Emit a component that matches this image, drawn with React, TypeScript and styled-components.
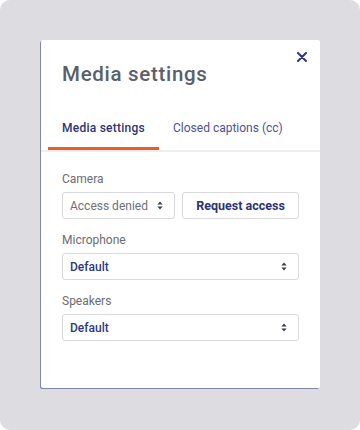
import React from 'react';
import styled, { createGlobalStyle } from 'styled-components';

const GlobalStyle = createGlobalStyle`
  body {
    margin: 0;
    background: #ffffff;
    font-family: Roboto, 'Liberation Sans', sans-serif;
  }
`;

const ArrowsIcon = () => (
  <svg width="6" height="9" viewBox="0 0 6 9">
    <path d="M3 0.5 L5.6 3.6 H0.4 Z" fill="#3a3d4a" />
    <path d="M3 8.5 L5.6 5.4 H0.4 Z" fill="#3a3d4a" />
  </svg>
);

const CloseIcon = () => (
  <svg width="10" height="10" viewBox="0 0 10 10">
    <path d="M1 1 L9 9 M9 1 L1 9" stroke="#2d3786" strokeWidth="2" strokeLinecap="round" />
  </svg>
);

type SelectProps = {
  value: string;
  muted?: boolean;
  width?: string;
};

const SelectBox = ({ value, muted, width }: SelectProps) => (
  <Select $muted={muted} $width={width}>
    <span>{value}</span>
    <ArrowsIcon />
  </Select>
);

const App = () => {
  return (
    <>
      <GlobalStyle />
      <Backdrop>
        <Modal>
          <CloseButton aria-label="Close">
            <CloseIcon />
          </CloseButton>
          <Title>Media settings</Title>
          <TabList>
            <Tab $active>Media settings</Tab>
            <Tab>Closed captions (cc)</Tab>
          </TabList>
          <Body>
            <Field>
              <Label>Camera</Label>
              <Row>
                <SelectBox value="Access denied" muted width="113px" />
                <RequestButton>Request access</RequestButton>
              </Row>
            </Field>
            <Field>
              <Label>Microphone</Label>
              <SelectBox value="Default" />
            </Field>
            <Field>
              <Label>Speakers</Label>
              <SelectBox value="Default" />
            </Field>
          </Body>
        </Modal>
      </Backdrop>
    </>
  );
};

export default App;

const Backdrop = styled.div`
  width: 360px;
  height: 430px;
  box-sizing: border-box;
  padding: 40px 40px 0 41px;
  background: #dcdce1;
  border-radius: 10px;
`;

const Modal = styled.div`
  position: relative;
  width: 279px;
  height: 348px;
  box-sizing: border-box;
  padding-top: 22px;
  background: #ffffff;
  border-radius: 2px;
  box-shadow: -1px 1px 0 #8186ab;
`;

const CloseButton = styled.button`
  position: absolute;
  top: 12px;
  right: 13px;
  width: 10px;
  height: 10px;
  padding: 0;
  border: none;
  background: none;
  display: flex;
  cursor: pointer;
`;

const Title = styled.h2`
  margin: 0;
  padding: 0 21px;
  font-size: 20.5px;
  line-height: 24px;
  font-weight: 500;
  letter-spacing: 0.7px;
  color: #5b5e6b;
`;

const TabList = styled.div`
  display: flex;
  margin-top: 34px;
  padding: 0 7px;
  border-bottom: 2px solid #eeeef0;
`;

const Tab = styled.div<{ $active?: boolean }>`
  padding: 0 14px 11px;
  font-size: 12px;
  line-height: 16px;
  font-weight: ${(p) => (p.$active ? 500 : 400)};
  letter-spacing: ${(p) => (p.$active ? '0.25px' : '0')};
  color: ${(p) => (p.$active ? '#2c3474' : '#4a519b')};
  border-bottom: 3px solid ${(p) => (p.$active ? '#f15a24' : 'transparent')};
`;

const Body = styled.div`
  display: flex;
  flex-direction: column;
  gap: 13px;
  padding: 19px 21px 0;
`;

const Field = styled.div`
  display: flex;
  flex-direction: column;
  gap: 5px;
`;

const Label = styled.div`
  font-size: 12px;
  line-height: 16px;
  color: #6b6c73;
`;

const Row = styled.div`
  display: flex;
  gap: 7px;
`;

const Select = styled.div<{ $muted?: boolean; $width?: string }>`
  width: ${(p) => p.$width || '100%'};
  height: 27px;
  box-sizing: border-box;
  display: flex;
  align-items: center;
  justify-content: space-between;
  padding: 0 11px 0 7px;
  border: 1px solid #d9d9de;
  border-radius: 3px;
  background: #ffffff;
  font-size: 12px;
  color: ${(p) => (p.$muted ? '#6e6f76' : '#2e3785')};
  font-weight: ${(p) => (p.$muted ? 400 : 500)};
`;

const RequestButton = styled.button`
  flex: 1;
  height: 27px;
  padding: 0;
  border: 1px solid #d9d9de;
  border-radius: 3px;
  background: #ffffff;
  font-family: inherit;
  font-size: 12.5px;
  font-weight: 700;
  color: #2b3278;
  cursor: pointer;
`;
